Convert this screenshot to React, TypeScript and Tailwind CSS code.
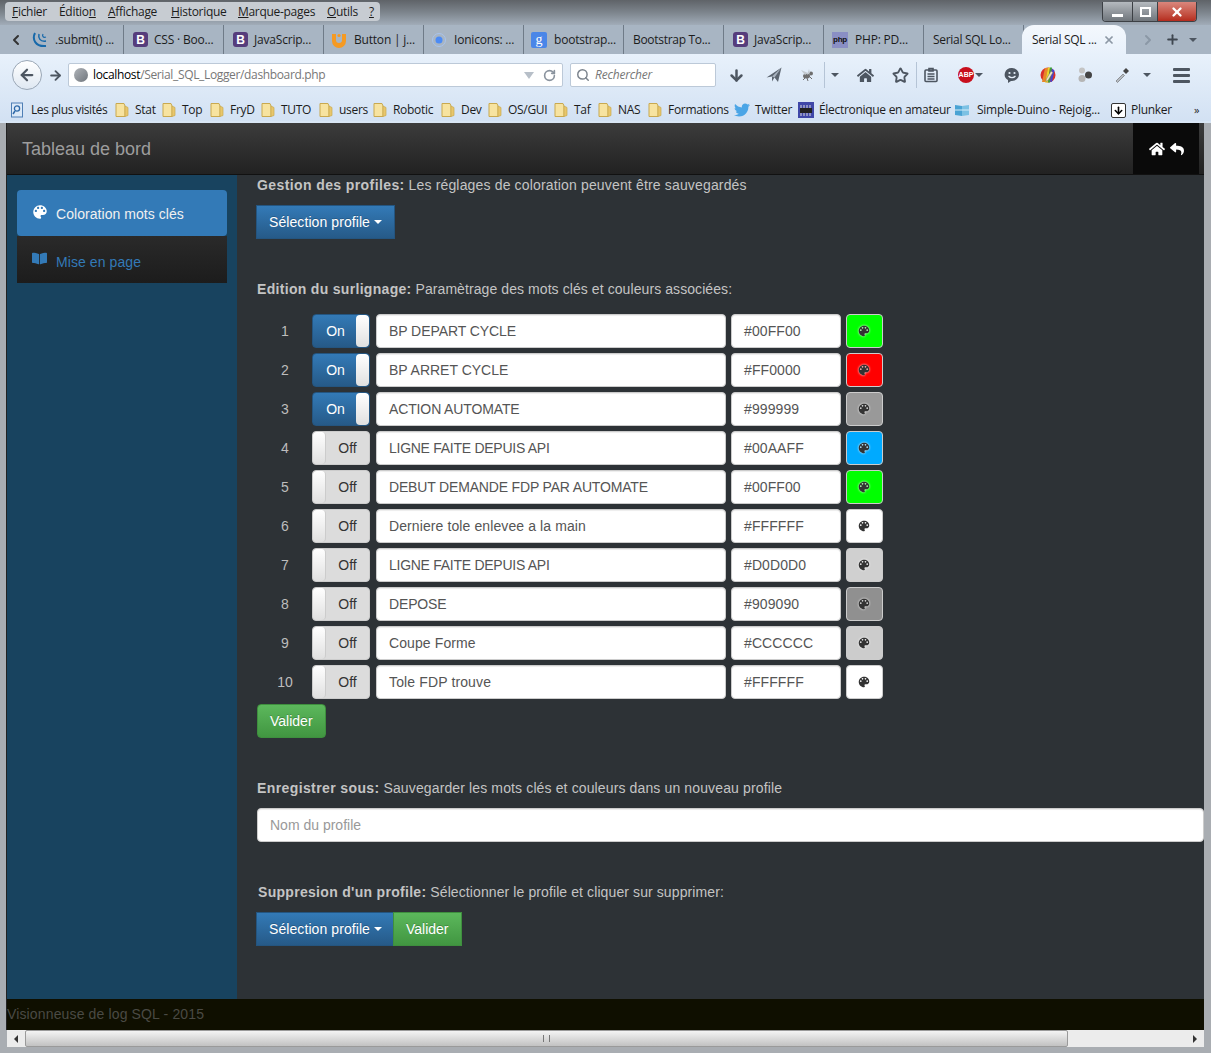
import {
  ArrowDown,
  ArrowLeft,
  ArrowRight,
  ChevronLeft,
  ChevronRight,
  Plus,
  RotateCw,
  Search,
  Star,
  X,
} from "lucide-react";
import { FaBookOpen, FaHome, FaReply, FaTwitter } from "react-icons/fa";
import { IoMdColorPalette } from "react-icons/io";

const menus = [
  { before: "", key: "F", after: "ichier", w: "w-[47px]" },
  { before: "Éditio", key: "n", after: "", w: "w-[49px]" },
  { before: "", key: "A", after: "ffichage", w: "w-[63px]" },
  { before: "", key: "H", after: "istorique", w: "w-[67px]" },
  { before: "", key: "M", after: "arque-pages", w: "w-[89px]" },
  { before: "", key: "O", after: "utils", w: "w-[42px]" },
  { before: "", key: "?", after: "", w: "w-[10px]" },
];

const tabs = [
  { label: ".submit() ...", icon: "jq", w: "w-[97px] pl-[5px] gap-[7px] tracking-[-0.2px]" },
  { label: "CSS · Boo...", icon: "bs", w: "w-[100px] pl-[9px] gap-[6px] tracking-[-0.2px]" },
  { label: "JavaScrip...", icon: "bs", w: "w-[100px] pl-[9px] gap-[6px] tracking-[-0.2px]" },
  { label: "Button | j...", icon: "ui", w: "w-[100px] pl-[7px] gap-[7px] tracking-[-0.2px]" },
  { label: "Ionicons: ...", icon: "ion", w: "w-[100px] pl-[7px] gap-[7px] tracking-[-0.2px]" },
  { label: "bootstrap...", icon: "g", w: "w-[100px] pl-[7px] gap-[7px] tracking-[-0.2px]" },
  { label: "Bootstrap To...", icon: "", w: "w-[100px] pl-[9px] tracking-[-0.3px]" },
  { label: "JavaScrip...", icon: "bs", w: "w-[100px] pl-[9px] gap-[6px] tracking-[-0.2px]" },
  { label: "PHP: PD...", icon: "php", w: "w-[100px] pl-[8px] gap-[7px] tracking-[-0.2px]" },
  { label: "Serial SQL Lo...", icon: "", w: "w-[100px] pl-[9px] tracking-[-0.3px]" },
];

const bookmarks = [
  { label: "Les plus visités", icon: "smart", w: "w-[104px] tracking-[-0.42px]" },
  { label: "Stat", icon: "folder", w: "w-[47px]" },
  { label: "Top", icon: "folder", w: "w-[48px]" },
  { label: "FryD", icon: "folder", w: "w-[51px]" },
  { label: "TUTO", icon: "folder", w: "w-[58px]" },
  { label: "users", icon: "folder", w: "w-[54px]" },
  { label: "Robotic", icon: "folder", w: "w-[68px]" },
  { label: "Dev", icon: "folder", w: "w-[47px]" },
  { label: "OS/GUI", icon: "folder", w: "w-[66px]" },
  { label: "Taf", icon: "folder", w: "w-[44px]" },
  { label: "NAS", icon: "folder", w: "w-[50px]" },
  { label: "Formations", icon: "folder", w: "w-[87px]" },
  { label: "Twitter", icon: "twitter", w: "w-[64px]" },
  { label: "Électronique en amateur", icon: "chip", w: "w-[156px]" },
  { label: "Simple-Duino - Rejoig...", icon: "book", w: "w-[157px] tracking-[-0.25px]" },
  { label: "Plunker", icon: "plunker", w: "w-[85px]" },
];

const rows = [
  { on: true, text: "BP DEPART CYCLE", track: "tracking-[-0.07px]", code: "#00FF00", swatch: "bg-[#00ff00]" },
  { on: true, text: "BP ARRET CYCLE", track: "", code: "#FF0000", swatch: "bg-[#ff0000]" },
  { on: true, text: "ACTION AUTOMATE", track: "tracking-[-0.13px]", code: "#999999", swatch: "bg-[#999999]" },
  { on: false, text: "LIGNE FAITE DEPUIS API", track: "tracking-[-0.27px]", code: "#00AAFF", swatch: "bg-[#00aaff]" },
  { on: false, text: "DEBUT DEMANDE FDP PAR AUTOMATE", track: "tracking-[-0.17px]", code: "#00FF00", swatch: "bg-[#00ff00]" },
  { on: false, text: "Derniere tole enlevee a la main", track: "tracking-[0.1px]", code: "#FFFFFF", swatch: "bg-[#ffffff]" },
  { on: false, text: "LIGNE FAITE DEPUIS API", track: "tracking-[-0.27px]", code: "#D0D0D0", swatch: "bg-[#d0d0d0]" },
  { on: false, text: "DEPOSE", track: "tracking-[-0.15px]", code: "#909090", swatch: "bg-[#909090]" },
  { on: false, text: "Coupe Forme", track: "tracking-[0.1px]", code: "#CCCCCC", swatch: "bg-[#cccccc]" },
  { on: false, text: "Tole FDP trouve", track: "tracking-[0.13px]", code: "#FFFFFF", swatch: "bg-[#ffffff]" },
];

const primaryBtn =
  "flex h-[34px] items-center border border-[#245580] bg-gradient-to-b from-[#337ab7] to-[#265a88] px-3 text-white [text-shadow:0_-1px_0_rgba(0,0,0,0.2)]";
const successBtn =
  "flex h-[34px] items-center border border-[#3e8f3e] bg-gradient-to-b from-[#5cb85c] to-[#419641] px-3 text-white [text-shadow:0_-1px_0_rgba(0,0,0,0.2)]";
const field =
  "flex h-[34px] items-center rounded border border-[#ccc] bg-white px-3 text-[#555] shadow-[inset_0_1px_1px_rgba(0,0,0,0.075)]";

function TabIcon({ kind }: { kind: string }) {
  if (kind === "bs") {
    return (
      <span className="flex h-[15px] w-[15px] items-center justify-center rounded-[3px] bg-[#563d7c] font-['Liberation_Sans',sans-serif] text-[12px] font-bold text-white">
        B
      </span>
    );
  }
  if (kind === "jq") {
    return (
      <svg viewBox="0 0 16 16" className="h-4 w-4 text-[#1769aa]" fill="none" stroke="currentColor">
        <path d="M3 1c-3 6 0 14 11 13" strokeWidth="2" />
        <path d="M7 2c-1 4 1 8 7 7" strokeWidth="1.5" />
        <path d="M11 2c-1 2 0 4 3 3" strokeWidth="1.2" />
      </svg>
    );
  }
  if (kind === "ui") {
    return (
      <svg viewBox="0 0 16 16" className="h-4 w-4">
        <path d="M1 2h4v6a3 3 0 0 0 6 0V2h4v7a7 7 0 0 1-14 0z" fill="#f59a23" />
        <circle cx="8" cy="3.5" r="1.6" fill="#f59a23" />
      </svg>
    );
  }
  if (kind === "ion") {
    return (
      <svg viewBox="0 0 16 16" className="h-4 w-4">
        <circle cx="8" cy="8" r="6.5" fill="none" stroke="#a9c4ec" />
        <circle cx="8" cy="8" r="3.5" fill="#4c8bf5" />
      </svg>
    );
  }
  if (kind === "g") {
    return (
      <span className="flex h-4 w-4 items-center justify-center rounded-[2px] bg-[#4a86e8] font-['Liberation_Serif',serif] text-[14px] leading-none text-white">
        g
      </span>
    );
  }
  if (kind === "php") {
    return (
      <span className="flex h-4 w-4 items-center justify-center bg-[#8a8fc4] font-['Liberation_Sans',sans-serif] text-[8px] font-bold text-[#111]">
        php
      </span>
    );
  }
  return null;
}

function BookmarkIcon({ kind }: { kind: string }) {
  if (kind === "folder") {
    return (
      <svg viewBox="0 0 16 16" className="h-4 w-4 shrink-0">
        <path d="M2 1.5h8l1 2.5v10.5H2z" fill="#f7e3a0" stroke="#c9a94f" />
        <path d="M11 4l3 1.5v8l-3 1z" fill="#e8c66c" stroke="#c9a94f" strokeWidth="0.7" />
      </svg>
    );
  }
  if (kind === "smart") {
    return (
      <svg viewBox="0 0 16 16" className="h-4 w-4 shrink-0">
        <rect x="1.5" y="1" width="11" height="14" fill="#dce9f7" stroke="#4f7fb5" />
        <circle cx="7" cy="6.5" r="2.6" fill="none" stroke="#2f69a8" strokeWidth="1.3" />
        <path d="M5 9l-2 3" stroke="#2f69a8" strokeWidth="1.5" />
      </svg>
    );
  }
  if (kind === "twitter") {
    return <FaTwitter className="h-4 w-4 shrink-0 text-[#4ba5e6]" />;
  }
  if (kind === "chip") {
    return (
      <svg viewBox="0 0 16 16" className="h-4 w-4 shrink-0">
        <rect width="16" height="16" fill="#3f47a8" />
        <rect x="2" y="6" width="12" height="5" fill="#222" />
        <path d="M3 11v3M6 11v3M9 11v3M12 11v3M3 6V3M6 6V3M9 6V3M12 6V3" stroke="#ddd" />
      </svg>
    );
  }
  if (kind === "book") {
    return (
      <svg viewBox="0 0 16 16" className="mr-[2px] h-4 w-4 shrink-0">
        <path d="M1 3l7 1v10l-7-1z" fill="#4aa3d4" />
        <path d="M15 3L8 4v10l7-1z" fill="#7cc1e4" />
        <path d="M1 8h14" stroke="#d5edf8" />
      </svg>
    );
  }
  return (
    <span className="flex h-[15px] w-[15px] shrink-0 items-center justify-center rounded-[2px] border border-[#333] bg-white text-black">
      <ArrowDown size={11} strokeWidth={3.5} />
    </span>
  );
}

function Caret() {
  return <span className="h-0 w-0 border-x-[4px] border-t-[4px] border-x-transparent border-t-[#4d5661]" />;
}

function Separator() {
  return <span className="h-[26px] w-px bg-[#b5c4d6]" />;
}

function Toolbar() {
  return (
    <div className="flex h-[40px] items-center pl-[12px] pt-[2px]">
      <span className="z-10 flex h-[30px] w-[30px] items-center justify-center rounded-full border border-[#9aa7b6] bg-gradient-to-b from-white to-[#dfe8f2] text-[#4d5661]">
        <ArrowLeft size={18} strokeWidth={3} />
      </span>
      <span className="flex w-[26px] justify-center pl-[1px] text-[#4d5661]">
        <ArrowRight size={15} strokeWidth={3} />
      </span>
      <div className="flex h-[24px] w-[495px] items-center rounded-[2px] border border-[#bcc9d8] bg-white pl-[5px] text-[12px]">
        <span className="h-[14px] w-[14px] rounded-full bg-gradient-to-br from-[#b0b4b9] to-[#70767d]" />
        <span className="ml-[5px] flex-1 tracking-[-0.35px] text-[#777]">
          <span className="text-black">localhost</span>/Serial_SQL_Logger/dashboard.php
        </span>
        <span className="mr-[9px] h-0 w-0 border-x-[5px] border-t-[7px] border-x-transparent border-t-[#b7bfc8]" />
        <RotateCw size={13} strokeWidth={3} className="mr-[6px] text-[#8a939e]" />
      </div>
      <div className="ml-[7px] flex h-[24px] w-[146px] items-center rounded-[2px] border border-[#bcc9d8] bg-white pl-[5px] text-[12px] italic text-[#777]">
        <Search size={14} strokeWidth={2.5} className="text-[#7b838c]" />
        <span className="ml-[5px] tracking-[-0.2px]">Rechercher</span>
      </div>
      <span className="flex w-[40px] justify-center pl-[1px] text-[#4d5661]">
        <ArrowDown size={17} strokeWidth={3.5} />
      </span>
      <span className="flex w-[36px] justify-center text-[#5c6570]">
        <svg viewBox="0 0 16 16" className="h-4 w-4" fill="currentColor">
          <path d="M0.5 10.5L15.5 0.5 12 15 8.5 10.5 6 14.5 6 9.5z" />
          <path d="M6 9.5L15.5 0.5 8.5 10.5" fill="#aab4c0" />
        </svg>
      </span>
      <span className="flex w-[32px] justify-center text-[#6e6e6e]">
        <svg viewBox="0 0 16 16" className="h-4 w-4" fill="currentColor">
          <ellipse cx="6.5" cy="9" rx="3.5" ry="2.5" />
          <circle cx="11" cy="6.5" r="2" />
          <path d="M5 8L1 3 8 6M7 8l2-6 1 4" fill="#c3c9cf" />
          <path d="M3 13l3-3M8 14l-1-3M12 12L9 9" stroke="currentColor" strokeWidth="1" />
        </svg>
      </span>
      <Separator />
      <span className="flex w-[20px] justify-center">
        <Caret />
      </span>
      <span className="flex w-[40px] justify-center text-[#4d5661]">
        <FaHome size={17} />
      </span>
      <span className="flex w-[31px] justify-center text-[#4d5661]">
        <Star size={17} strokeWidth={2.6} />
      </span>
      <Separator />
      <span className="flex w-[28px] justify-center text-[#4d5661]">
        <svg viewBox="0 0 16 16" className="h-4 w-4" fill="none" stroke="currentColor" strokeWidth="1.6">
          <rect x="2" y="3" width="12" height="11.5" rx="1" />
          <path d="M6 1.5h4V4H6zM4.5 7h7M4.5 9.5h7M4.5 12h7" />
        </svg>
      </span>
      <span className="ml-[13px] flex h-[16px] w-[16px] items-center justify-center rounded-full bg-[#c80f1d] font-['Liberation_Sans',sans-serif] text-[7px] font-bold text-white">
        ABP
      </span>
      <span className="flex w-[10px] justify-center">
        <Caret />
      </span>
      <span className="ml-[19px] flex w-[18px] justify-center">
        <svg viewBox="0 0 16 16" className="h-4 w-4">
          <path d="M8 1a7 6.5 0 0 1 0 13H7l-3 2v-3A7 6.5 0 0 1 8 1z" fill="#4d5661" />
          <circle cx="5.5" cy="6" r="1.1" fill="#e6eff9" />
          <circle cx="10.5" cy="6" r="1.1" fill="#e6eff9" />
          <path d="M4.5 9c2 2.2 5 2.2 7 0" fill="none" stroke="#e6eff9" strokeWidth="1.2" />
        </svg>
      </span>
      <span className="ml-[19px] flex h-[16px] w-[16px] justify-center">
        <svg viewBox="0 0 16 16" className="h-4 w-4">
          <circle cx="8" cy="8" r="7.5" fill="#d9302a" />
          <path d="M5 1h3L5 15H2z" fill="#e8862a" />
          <path d="M8 .5h2L8 15.5H5z" fill="#e8d52a" />
          <path d="M10 .5h2L10 15.5H8z" fill="#38a13f" />
          <path d="M12 1.5l2.5 2L12 15l-2-.5z" fill="#4a45c9" />
          <path d="M11 4l2 1.5-5 8-2 1 .3-2.4z" fill="#ece3c2" stroke="#555" strokeWidth="0.4" />
        </svg>
      </span>
      <span className="ml-[21px] flex w-[16px] justify-center">
        <svg viewBox="0 0 16 16" className="h-4 w-4">
          <circle cx="5" cy="3.5" r="3" fill="#c4c4c4" />
          <circle cx="5" cy="11.5" r="3.5" fill="#b5b5b5" />
          <circle cx="11.5" cy="8" r="3.5" fill="#444" />
        </svg>
      </span>
      <span className="ml-[21px] flex w-[16px] justify-center">
        <svg viewBox="0 0 16 16" className="h-4 w-4">
          <path d="M2 14l7-7 1.5 1.5-7 7z" fill="#b5bbc2" stroke="#666" strokeWidth="0.6" />
          <path d="M9 4l3-3 3 3-3 3z" fill="#444" />
        </svg>
      </span>
      <span className="ml-[7px]">
        <Separator />
      </span>
      <span className="flex w-[20px] justify-center">
        <Caret />
      </span>
      <span className="ml-[2px]">
        <Separator />
      </span>
      <span className="ml-[14px] flex w-[17px] flex-col gap-[3px]">
        <span className="h-[3px] rounded-[1px] bg-[#4d5661]" />
        <span className="h-[3px] rounded-[1px] bg-[#4d5661]" />
        <span className="h-[3px] rounded-[1px] bg-[#4d5661]" />
      </span>
    </div>
  );
}

function BrowserChrome() {
  return (
    <div className="h-[123px] font-['Open_Sans',sans-serif] text-[12px] text-[#1c1c1c]">
      <div className="flex h-[25px] items-start bg-gradient-to-b from-[#5f6368] via-[#7d858d] to-[#a1acb8] pl-[5px] pt-[2px]">
        <div className="flex h-[19px] w-[375px] items-center rounded-[4px] bg-[#c7ccd2] pl-[7px] tracking-[-0.3px]">
          {menus.map((menu) => (
            <span key={menu.key} className={`${menu.w} whitespace-nowrap`}>
              {menu.before}
              <u>{menu.key}</u>
              {menu.after}
            </span>
          ))}
        </div>
        <div className="ml-auto mr-[14px] flex h-[20px] overflow-hidden rounded-b-[4px] border border-t-0 border-[#3c4045]">
          <span className="flex w-[29px] items-end justify-center bg-gradient-to-b from-[#b5babf] to-[#70767c] pb-[4px]">
            <span className="h-[3px] w-[11px] bg-white" />
          </span>
          <span className="flex w-[26px] items-center justify-center border-x border-[#3c4045] bg-gradient-to-b from-[#b5babf] to-[#70767c]">
            <span className="h-[10px] w-[11px] border-2 border-white" />
          </span>
          <span className="flex w-[38px] items-center justify-center bg-gradient-to-b from-[#d9867c] to-[#b52a1c] text-white">
            <X size={14} strokeWidth={4} />
          </span>
        </div>
      </div>

      <div className="flex h-[29px] items-stretch bg-[#a8b5c3]">
        <span className="flex w-[27px] items-center justify-end pr-[3px] text-[#333]">
          <ChevronLeft size={16} strokeWidth={3} />
        </span>
        {tabs.map((tab, index) => (
          <div key={index} className={`flex items-center border-r border-[#6f7b88] ${tab.w}`}>
            <TabIcon kind={tab.icon} />
            <span className="whitespace-nowrap">{tab.label}</span>
          </div>
        ))}
        <div className="ml-[-2px] flex w-[104px] items-center rounded-t-[12px] bg-gradient-to-b from-[#f4f8fd] to-[#e8f1fb] pl-[10px] tracking-[-0.3px]">
          <span className="whitespace-nowrap">Serial SQL ...</span>
          <X size={12} strokeWidth={3.5} className="ml-[6px] text-[#8d98a5]" />
        </div>
        <span className="ml-[14px] flex items-center text-[#8b98a6]">
          <ChevronRight size={16} strokeWidth={3} />
        </span>
        <span className="ml-[9px] flex items-center text-[#3f4750]">
          <Plus size={15} strokeWidth={3} />
        </span>
        <span className="ml-[9px] flex items-center">
          <Caret />
        </span>
      </div>

      <div className="bg-gradient-to-b from-[#e8f1fb] to-[#d2e1f3]">
        <Toolbar />
        <div className="flex h-[29px] items-center border-b-[2px] border-[#d9e6f5] pl-[10px] pt-[5px] tracking-[-0.3px]">
          {bookmarks.map((item) => (
            <span key={item.label} className={`${item.w} flex items-center gap-[5px] whitespace-nowrap`}>
              <BookmarkIcon kind={item.icon} />
              {item.label}
            </span>
          ))}
          <span className="-ml-[2px] text-[11px]">»</span>
        </div>
      </div>
    </div>
  );
}

function Toggle({ on }: { on: boolean }) {
  if (on) {
    return (
      <div className="flex h-[34px] w-[58px] overflow-hidden rounded border border-[#245580] bg-gradient-to-b from-[#337ab7] to-[#265a88]">
        <span className="flex flex-1 items-center justify-center pl-[2px] text-white">On</span>
        <span className="w-[13px] rounded bg-gradient-to-b from-white to-[#e0e0e0]" />
      </div>
    );
  }
  return (
    <div className="flex h-[34px] w-[58px] overflow-hidden rounded border border-[#ccc] bg-[#dcdcdc]">
      <span className="w-[13px] rounded border-r border-[#ccc] bg-gradient-to-b from-white to-[#e0e0e0]" />
      <span className="flex flex-1 items-center justify-center text-[#333]">Off</span>
    </div>
  );
}

function Row({ index, row }: { index: number; row: (typeof rows)[number] }) {
  return (
    <div className="flex h-[34px] items-center">
      <span className="w-[55px] pl-[1px] text-center text-[#bdbdbd]">{index}</span>
      <Toggle on={row.on} />
      <div className={`${field} ml-[6px] w-[350px] ${row.track}`}>{row.text}</div>
      <div className={`${field} ml-[5px] w-[110px] tracking-[0.1px]`}>{row.code}</div>
      <div
        className={`ml-[5px] flex h-[34px] w-[37px] items-center justify-center rounded border border-[#ccc] pr-[2px] ${row.swatch}`}
      >
        <IoMdColorPalette size={14} className="text-[#333] drop-shadow-[0_0_1px_#fff]" />
      </div>
    </div>
  );
}

function Heading({
  title,
  text,
  titleTrack,
  textTrack,
  className,
}: {
  title: string;
  text: string;
  titleTrack: string;
  textTrack: string;
  className: string;
}) {
  return (
    <p className={`h-[20px] whitespace-nowrap leading-[20px] text-[#c4c4c4] ${className}`}>
      <b className={titleTrack}>{title}</b> <span className={textTrack}>{text}</span>
    </p>
  );
}

function SelectButton({ className }: { className: string }) {
  return (
    <button type="button" className={`${primaryBtn} ${className} gap-[4px] tracking-[0.08px]`}>
      Sélection profile
      <span className="h-0 w-0 border-x-[4px] border-t-[4px] border-x-transparent border-t-white" />
    </button>
  );
}

export default function App() {
  return (
    <div className="flex h-[1053px] w-[1211px] flex-col overflow-hidden bg-[#a9adb2] font-['Liberation_Sans',sans-serif] text-[14px]">
      <BrowserChrome />

      <div className="ml-[6px] mr-[7px] flex h-[907px] flex-col border-l border-[#222] bg-[#2d3236]">
        <header className="flex h-[52px] shrink-0 items-center justify-between border-b border-[#111] bg-gradient-to-b from-[#3c3c3c] to-[#222222] pl-[15px] pr-[5px]">
          <span className="pt-[2px] text-[18px] text-[#9d9d9d]">Tableau de bord</span>
          <div className="flex h-full w-[66px] items-center justify-center gap-[5px] bg-[#0a0a0a] text-white">
            <FaHome size={16} />
            <FaReply size={14} />
          </div>
        </header>

        <div className="flex min-h-0 flex-1">
          <aside className="w-[230px] shrink-0 bg-[#18435f] px-[10px] pt-[15px]">
            <div className="flex h-[46px] items-center rounded bg-[#337ab7] pl-[14px] text-[#f0f0f0]">
              <IoMdColorPalette size={18} className="mb-[2px] text-white" />
              <span className="ml-[7px] pt-[2px] tracking-[0.05px]">Coloration mots clés</span>
            </div>
            <div className="flex h-[47px] items-center bg-gradient-to-b from-[#2a2a2a] to-[#1c1c1c] pl-[15px] text-[#337ab7]">
              <FaBookOpen size={15} className="mb-[3px]" />
              <span className="ml-[9px] pt-[5px] tracking-[0.08px]">Mise en page</span>
            </div>
          </aside>

          <main className="min-w-0 flex-1 overflow-hidden pl-[20px]">
            <Heading
              title="Gestion des profiles:"
              text="Les réglages de coloration peuvent être sauvegardés"
              titleTrack="tracking-[0.4px]"
              textTrack="tracking-[0.16px]"
              className=""
            />
            <SelectButton className="-ml-[1px] mt-[10px]" />
            <Heading
              title="Edition du surlignage:"
              text="Paramètrage des mots clés et couleurs associées:"
              titleTrack="tracking-[0.31px]"
              textTrack="tracking-[0.08px]"
              className="mt-[40px]"
            />
            <div className="mt-[15px] flex flex-col gap-[5px]">
              {rows.map((row, index) => (
                <Row key={index} index={index + 1} row={row} />
              ))}
            </div>
            <button type="button" className={`${successBtn} mt-[5px] rounded`}>
              Valider
            </button>
            <Heading
              title="Enregistrer sous:"
              text="Sauvegarder les mots clés et couleurs dans un nouveau profile"
              titleTrack="tracking-[0.39px]"
              textTrack="tracking-[0.13px]"
              className="mt-[40px]"
            />
            <div className={`${field} mt-[10px] !text-[#999]`}>Nom du profile</div>
            <Heading
              title="Suppresion d'un profile:"
              text="Sélectionner le profile et cliquer sur supprimer:"
              titleTrack="tracking-[0.3px]"
              textTrack="tracking-[0.1px]"
              className="mt-[40px] pl-[1px]"
            />
            <div className="-ml-[1px] mt-[10px] flex">
              <SelectButton className="" />
              <button type="button" className={`${successBtn} -ml-[2px]`}>
                Valider
              </button>
            </div>
          </main>
        </div>

        <footer className="flex h-[31px] shrink-0 items-center bg-[#0f0f00] tracking-[0.14px] text-[#4a4a44]">
          Visionneuse de log SQL - 2015
        </footer>
      </div>

      <div className="mx-[7px] flex h-[17px] items-stretch bg-[#ececec]">
        <span className="flex w-[18px] items-center justify-center">
          <span className="h-0 w-0 border-y-[4px] border-r-[4px] border-y-transparent border-r-[#333]" />
        </span>
        <div className="flex w-[1043px] items-center justify-center rounded-[2px] border border-[#9a9a9a] bg-gradient-to-b from-[#f4f4f4] to-[#c2c2c2]">
          <span className="h-[7px] w-[7px] border-x border-[#777]" />
        </div>
        <span className="ml-auto flex w-[18px] items-center justify-center">
          <span className="h-0 w-0 border-y-[4px] border-l-[4px] border-y-transparent border-l-[#333]" />
        </span>
      </div>
    </div>
  );
}
